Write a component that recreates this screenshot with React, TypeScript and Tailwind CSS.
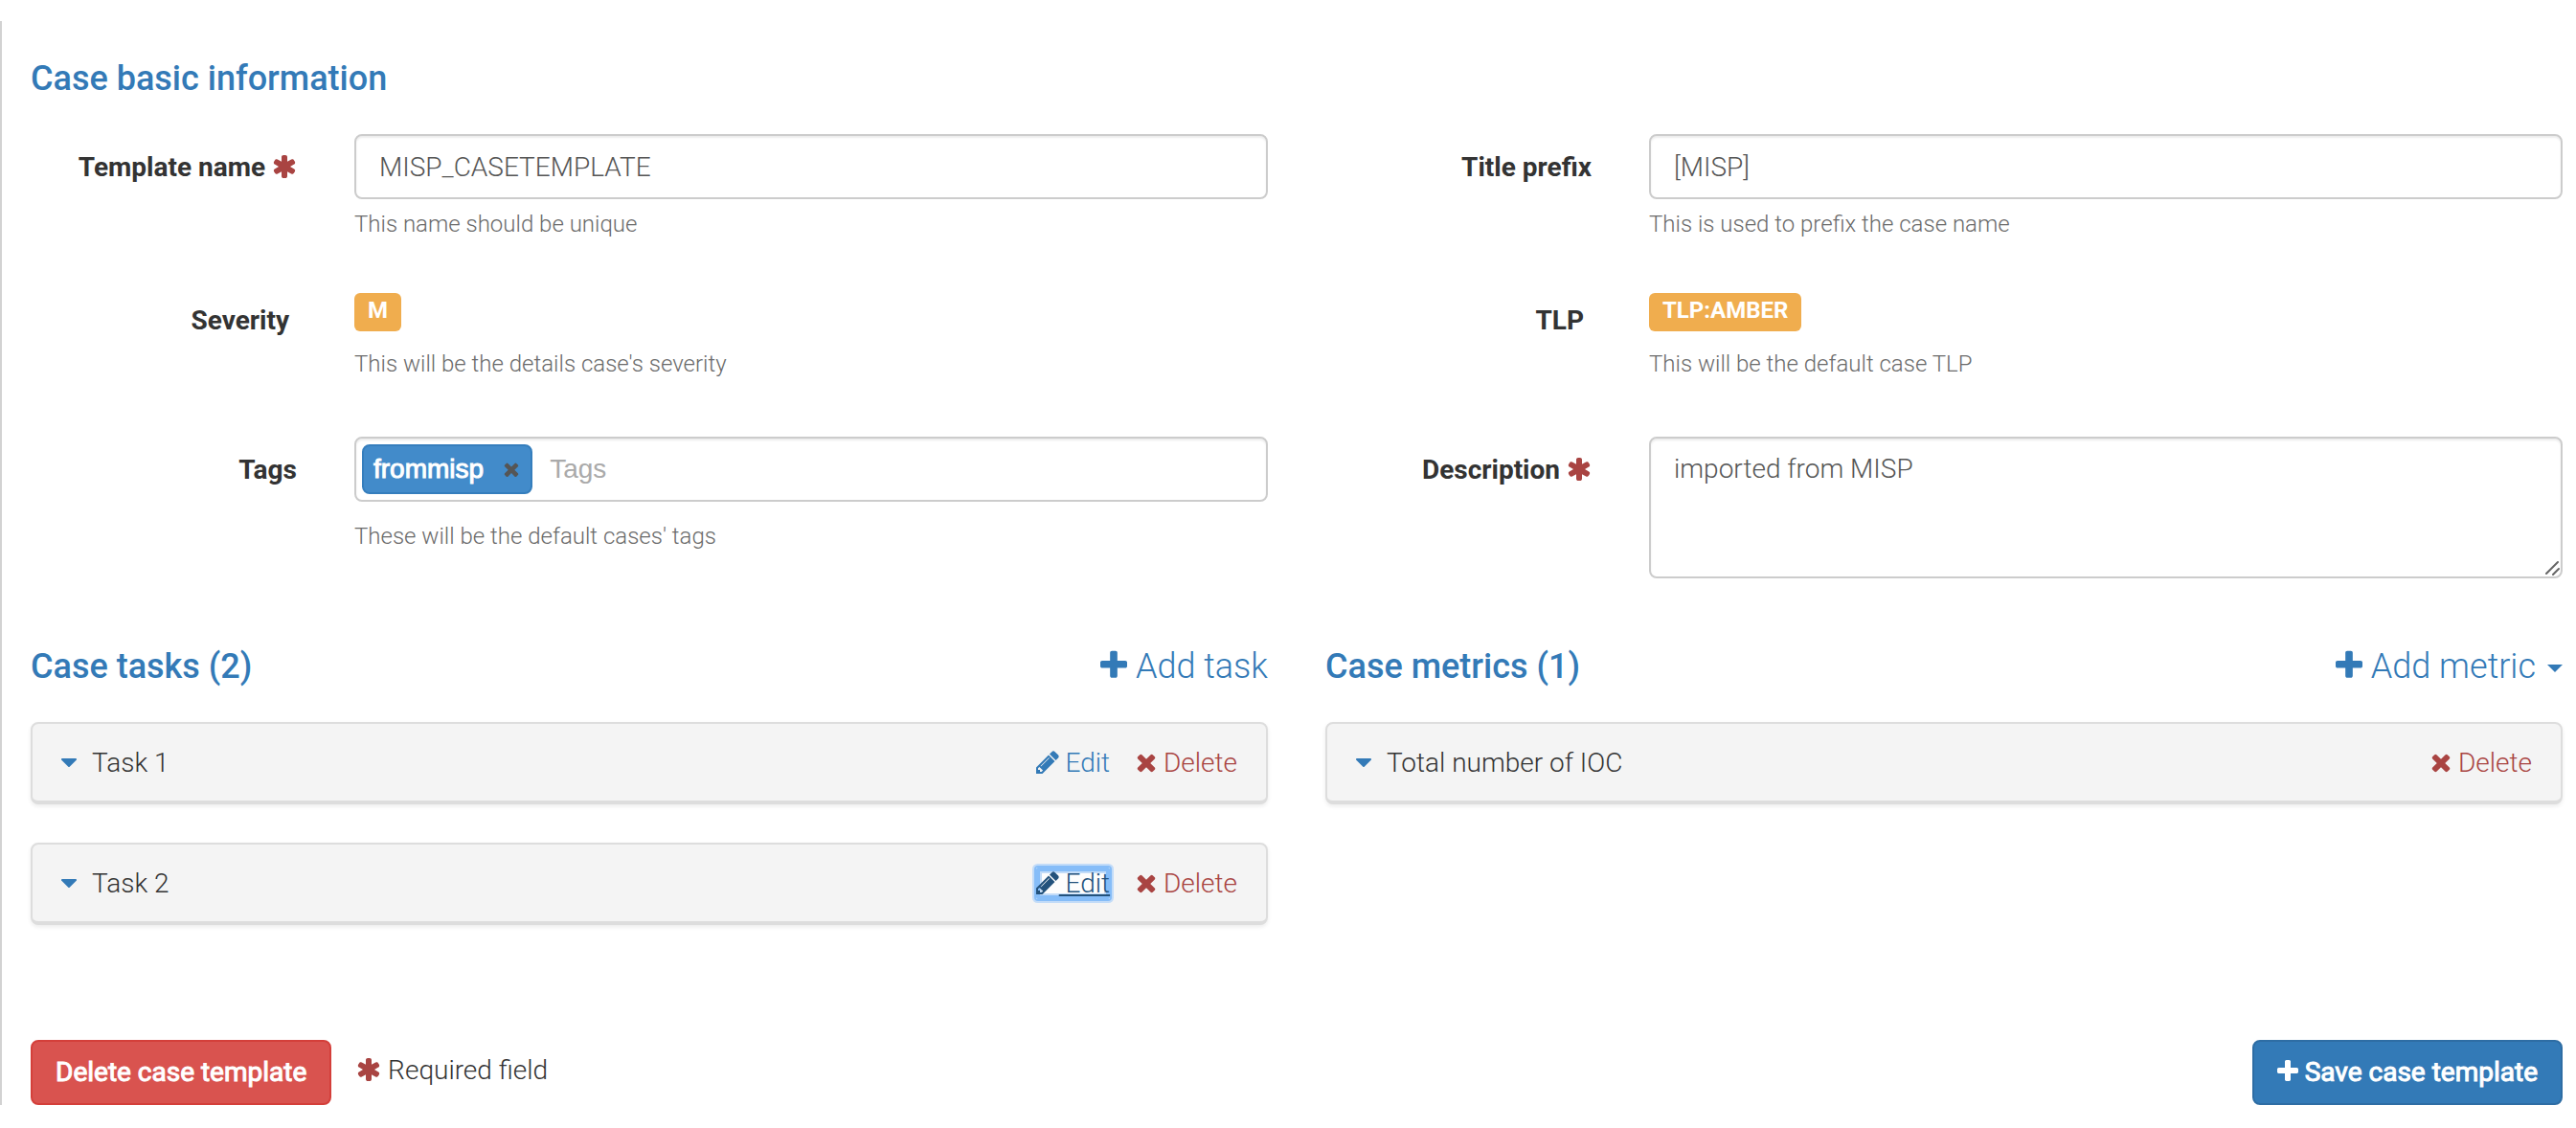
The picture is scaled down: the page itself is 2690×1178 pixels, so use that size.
import React from "react";

const PLUS =
  "M1600 736v192q0 40-28 68t-68 28h-416v416q0 40-28 68t-68 28h-192q-40 0-68-28t-28-68v-416h-416q-40 0-68-28t-28-68v-192q0-40 28-68t68-28h416v-416q0-40 28-68t68-28h192q40 0 68 28t28 68v416h416q40 0 68 28t28 68z";
const ASTERISK =
  "M1546 1050q46 26 59.5 77.5t-12.5 97.5l-64 110q-26 46-77.5 59.5t-97.5-12.5l-266-153v307q0 52-38 90t-90 38h-128q-52 0-90-38t-38-90v-307l-266 153q-46 26-97.5 12.5t-77.5-59.5l-64-110q-26-46-12.5-97.5t59.5-77.5l266-154-266-154q-46-26-59.5-77.5t12.5-97.5l64-110q26-46 77.5-59.5t97.5 12.5l266 153v-307q0-52 38-90t90-38h128q52 0 90 38t38 90v307l266-153q46-26 97.5-12.5t77.5 59.5l64 110q26 46 12.5 97.5t-59.5 77.5l-266 154z";
const TIMES =
  "M1490 1322q0 40-28 68l-136 136q-28 28-68 28t-68-28l-294-294-294 294q-28 28-68 28t-68-28l-136-136q-28-28-28-68t28-68l294-294-294-294q-28-28-28-68t28-68l136-136q28-28 68-28t68 28l294 294 294-294q28-28 68-28t68 28l136 136q28 28 28 68t-28 68l-294 294 294 294q28 28 28 68z";
const PENCIL =
  "M491 1536l91-91-235-235-91 91v107h128v128h107zm523-928q0-22-22-22-10 0-17 7l-542 542q-7 7-7 17 0 22 22 22 10 0 17-7l542-542q7-7 7-17zm-54-192l416 416-832 832h-416v-416zm683 96q0 53-37 90l-166 166-416-416 166-165q36-38 90-38 53 0 91 38l235 234q37 39 37 91z";
const CARET =
  "M1408 704q0 26-19 45l-448 448q-19 19-45 19t-45-19l-448-448q-19-19-19-45t19-45 45-19h896q26 0 45 19t19 45z";

function Icon({ d, viewBox, className }: { d: string; viewBox: string; className: string }) {
  return (
    <svg aria-hidden="true" viewBox={viewBox} fill="currentColor" className={className}>
      <path d={d} />
    </svg>
  );
}

const Plus = () => <Icon d={PLUS} viewBox="192 0 1408 1792" className="inline h-7 w-[22px] align-[-4px]" />;
const BigPlus = () => <Icon d={PLUS} viewBox="192 0 1408 1792" className="inline h-9 w-7 align-[-5px]" />;
const Required = () => (
  <Icon d={ASTERISK} viewBox="64 0 1664 1792" className="inline h-7 w-[26px] align-[-4px] text-[#a94442]" />
);
const Times = () => <Icon d={TIMES} viewBox="192 0 1408 1792" className="inline h-7 w-[22px] align-[-4px]" />;
const Pencil = () => <Icon d={PENCIL} viewBox="128 0 1536 1792" className="inline h-7 w-6 align-[-4px]" />;
const Caret = () => <Icon d={CARET} viewBox="384 0 1024 1792" className="inline h-7 w-4 align-[-4px]" />;

const control =
  "block w-full rounded-lg border-2 border-[#ccc] bg-white px-6 text-[#555] shadow-[inset_0_2px_2px_rgba(0,0,0,0.075)] outline-none";

function Field(props: {
  id?: string;
  label: string;
  required?: boolean;
  inset?: boolean;
  help?: string;
  children: React.ReactNode;
}) {
  const { id, label, required, inset, help, children } = props;
  return (
    <div className="grid grid-cols-12 gap-x-[60px]">
      <div className={inset ? "col-span-3 pt-[9px] pr-2 text-right" : "col-span-3 pt-[15px] text-right"}>
        <label htmlFor={id} className="font-bold whitespace-nowrap">
          {label}
          {required && (
            <>
              {" "}
              <Required />
            </>
          )}
        </label>
      </div>
      <div className="col-span-9">
        {children}
        {help && <p className="text-2xl leading-9 text-[#6b6b6b]">{help}</p>}
      </div>
    </div>
  );
}

function Heading({ children }: { children: React.ReactNode }) {
  return <h4 className="text-4xl leading-10 font-medium text-[#337ab7]">{children}</h4>;
}

function Badge({ children }: { children: React.ReactNode }) {
  return (
    <div className="mb-4 flex">
      <span className="h-10 rounded-md bg-[#f0ad4e] px-[14px] text-2xl leading-9 font-bold text-white">{children}</span>
    </div>
  );
}

function Item({ name, editable, focused }: { name: string; editable?: boolean; focused?: boolean }) {
  return (
    <div className="flex items-center justify-between rounded-lg border-2 border-b-4 border-[#ddd] bg-[#f4f4f4] px-[30px] pt-[21px] pb-[19px] shadow-[0_2px_4px_rgba(0,0,0,0.08)]">
      <div>
        <a href="#toggle" aria-label={"Toggle " + name} className="mr-4 text-[#337ab7]">
          <Caret />
        </a>
        {name}
      </div>
      <div className="flex gap-[27px]">
        {editable && (
          <span>
            <a
              href="#edit"
              className={
                focused
                  ? "rounded-xs bg-[#fdfdfd] text-[#23527c] underline decoration-2 underline-offset-2 shadow-[inset_0_0_0_4px_#86bdf8,inset_0_0_0_6px_#c3dcf8,0_0_0_2px_#86bdf8,0_0_0_4px_#c3dcf8]"
                  : "text-[#337ab7]"
              }
            >
              <Pencil /> Edit
            </a>
          </span>
        )}
        <a href="#delete" className="text-[#a94442]">
          <Times /> Delete
        </a>
      </div>
    </div>
  );
}

export default function App() {
  return (
    <div className="bg-white pt-[22px] font-['Roboto',sans-serif] text-[28px] leading-10 font-light text-[#333]">
      <form className="border-l-2 border-[#d2d2d2] pt-10 pr-[14px] pl-[30px]">
        <Heading>Case basic information</Heading>

        <div className="mt-[38px] grid grid-cols-2 gap-x-[60px]">
          <div>
            <div className="h-[166px]">
              <Field id="name" label="Template name" required help="This name should be unique">
                <input id="name" defaultValue="MISP_CASETEMPLATE" className={control + " mb-2 h-[68px]"} />
              </Field>
            </div>
            <div className="h-[150px]">
              <Field label="Severity" inset help="This will be the details case's severity">
                <Badge>M</Badge>
              </Field>
            </div>
            <Field id="tags" label="Tags" help="These will be the default cases' tags">
              <div className="mb-[18px] flex h-[68px] items-center gap-[18px] rounded-lg border-2 border-[#ccc] bg-white px-[6px] font-['Liberation_Sans',sans-serif] font-normal shadow-[inset_0_2px_2px_rgba(0,0,0,0.075)]">
                <span className="flex h-[52px] items-center rounded-lg border-2 border-[#357ebd] bg-[#428bca] pr-3 pl-[10px] text-white [-webkit-text-stroke:1px]">
                  frommisp
                  <button type="button" aria-label="Remove frommisp" className="ml-[21px] text-[#555]">
                    <Icon d={TIMES} viewBox="302 238 1188 1316" className="size-4" />
                  </button>
                </span>
                <input id="tags" placeholder="Tags" className="min-w-0 flex-1 outline-none placeholder:text-[#aaa]" />
              </div>
            </Field>
          </div>

          <div>
            <div className="h-[166px]">
              <Field id="prefix" label="Title prefix" help="This is used to prefix the case name">
                <input id="prefix" defaultValue="[MISP]" className={control + " mb-2 h-[68px]"} />
              </Field>
            </div>
            <div className="h-[150px]">
              <Field label="TLP" inset help="This will be the default case TLP">
                <Badge>TLP:AMBER</Badge>
              </Field>
            </div>
            <Field id="description" label="Description" required>
              <div className="relative">
                <textarea
                  id="description"
                  rows={3}
                  defaultValue="imported from MISP"
                  className={control + " h-[148px] resize-y py-3 [&::-webkit-resizer]:hidden"}
                />
                <svg
                  aria-hidden="true"
                  viewBox="0 0 16 16"
                  className="pointer-events-none absolute right-[3px] bottom-[3px] size-4 stroke-[#666] stroke-2"
                >
                  <path d="M2 14L14 2M9 15L15 9" strokeLinecap="round" />
                </svg>
              </div>
            </Field>
          </div>
        </div>

        <div className="mt-[72px] grid grid-cols-2 gap-x-[60px]">
          <section>
            <div className="flex items-center justify-between">
              <Heading>Case tasks (2)</Heading>
              <a href="#add-task" className="text-4xl leading-10 text-[#337ab7]">
                <BigPlus /> Add task
              </a>
            </div>
            <div className="mt-[38px] flex flex-col gap-10">
              <Item name="Task 1" editable />
              <Item name="Task 2" editable focused />
            </div>
          </section>
          <section>
            <div className="flex items-center justify-between">
              <Heading>Case metrics (1)</Heading>
              <a href="#add-metric" className="flex items-center text-4xl leading-10 text-[#337ab7]">
                <span>
                  <BigPlus /> Add metric
                </span>
                <span className="mt-1 ml-3 border-x-8 border-t-8 border-x-transparent border-t-[#337ab7]" />
              </a>
            </div>
            <div className="mt-[38px]">
              <Item name="Total number of IOC" />
            </div>
          </section>
        </div>

        <div className="mt-[120px] flex items-center justify-between">
          <div className="flex items-center gap-[26px]">
            <button
              type="button"
              className="h-[68px] rounded-lg border-2 border-[#d43f3a] bg-[#d9534f] px-6 font-normal text-white [-webkit-text-stroke:1px]"
            >
              Delete case template
            </button>
            <span className="pb-1">
              <Required /> Required field
            </span>
          </div>
          <button
            type="submit"
            className="h-[68px] rounded-lg border-2 border-[#2e6da4] bg-[#337ab7] px-6 font-normal text-white [-webkit-text-stroke:1px]"
          >
            <Plus /> Save case template
          </button>
        </div>
      </form>
    </div>
  );
}
